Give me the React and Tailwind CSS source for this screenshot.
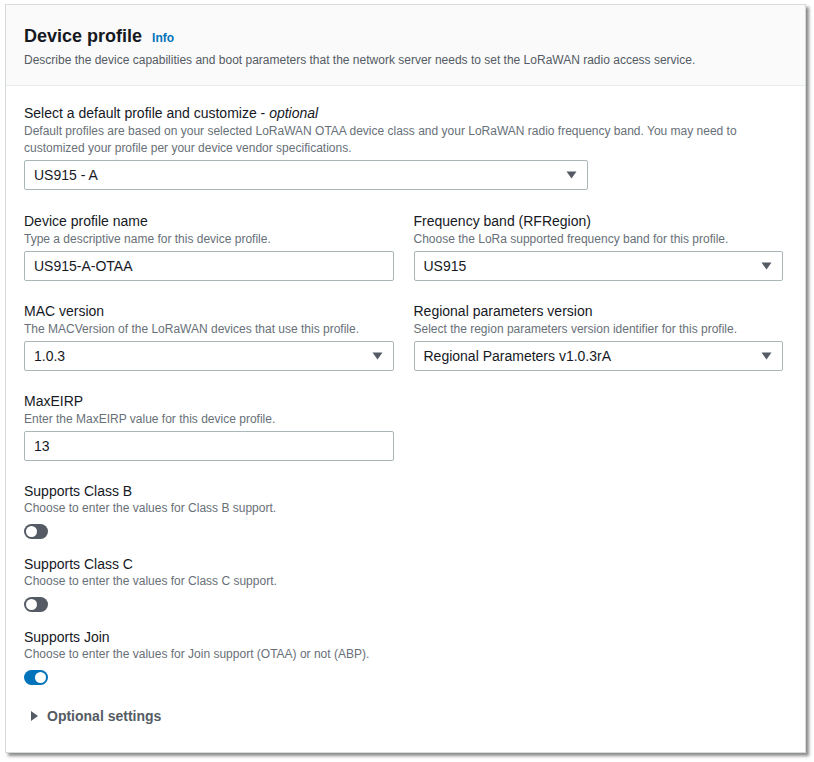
import React from 'react';

const Caret = () => (
  <svg width="11" height="8" viewBox="0 0 11 8" className="shrink-0">
    <path d="M0.5 0.5 L10.5 0.5 L5.5 7.5 Z" fill="#545b64" />
  </svg>
);

const Field = ({ label, help, children }) => (
  <div className="flex flex-col">
    <div className="text-[14px] leading-[18px] text-[#16191f]">{label}</div>
    <div className="text-[12px] leading-[16px] text-[#687078] mt-[1px]">{help}</div>
    <div className="mt-[4px]">{children}</div>
  </div>
);

const Input = ({ value }) => (
  <div className="h-[30px] border border-[#aab7b8] rounded-[2px] flex items-center px-[9px] text-[14px] text-[#16191f] bg-white">
    {value}
  </div>
);

const Select = ({ value }) => (
  <div className="h-[30px] border border-[#aab7b8] rounded-[2px] flex items-center justify-between pl-[9px] pr-[10px] text-[14px] text-[#16191f] bg-white">
    <span>{value}</span>
    <Caret />
  </div>
);

const Toggle = ({ on }) => (
  <div
    className={
      'w-[24px] h-[15px] rounded-full flex items-center px-[2px] ' +
      (on ? 'bg-[#0073bb] justify-end' : 'bg-[#545b64] justify-start')
    }
  >
    <div className="w-[11px] h-[11px] rounded-full bg-white" />
  </div>
);

const ToggleField = ({ label, help, on }) => (
  <div className="flex flex-col">
    <div className="text-[14px] leading-[18px] text-[#16191f]">{label}</div>
    <div className="text-[12px] leading-[16px] text-[#687078]">{help}</div>
    <div className="mt-[8px]">
      <Toggle on={on} />
    </div>
  </div>
);

export default function App() {
  return (
    <div className="w-[814px] h-[762px] bg-white pt-[4px] pl-[5px]" style={{ fontFamily: '"Liberation Sans", Arial, sans-serif' }}>
      <div className="w-[801px] h-[749px] bg-white border border-[#d5dbdb] shadow-[3px_3px_3px_rgba(0,0,0,0.45)] flex flex-col">
        {/* Header */}
        <div className="bg-[#fafafa] border-b border-[#eaeded] px-[18px] pt-[20px] pb-[17px]">
          <div className="flex items-baseline gap-[10px]">
            <h2 className="text-[18px] leading-[22px] font-bold text-[#16191f]">Device profile</h2>
            <span className="text-[12px] font-bold text-[#0073bb]">Info</span>
          </div>
          <p className="text-[12px] leading-[16px] text-[#545b64] mt-[5px]">
            Describe the device capabilities and boot parameters that the network server needs to set the LoRaWAN radio access service.
          </p>
        </div>

        {/* Body */}
        <div className="px-[18px] pt-[18px] flex flex-col">
          <div className="flex flex-col w-[730px]">
            <div className="text-[14px] leading-[18px] text-[#16191f]">
              Select a default profile and customize - <i>optional</i>
            </div>
            <div className="text-[12px] leading-[17px] text-[#687078] mt-[1px]">
              Default profiles are based on your selected LoRaWAN OTAA device class and your LoRaWAN radio frequency band. You may need to customized your profile per your device vendor specifications.
            </div>
          </div>
          <div className="w-[564px] mt-[3px]">
            <Select value="US915 - A" />
          </div>

          <div className="w-[759px] grid grid-cols-2 gap-x-[20px] gap-y-[21px] mt-[22px]">
            <Field label="Device profile name" help="Type a descriptive name for this device profile.">
              <Input value="US915-A-OTAA" />
            </Field>
            <Field label="Frequency band (RFRegion)" help="Choose the LoRa supported frequency band for this profile.">
              <Select value="US915" />
            </Field>
            <Field label="MAC version" help="The MACVersion of the LoRaWAN devices that use this profile.">
              <Select value="1.0.3" />
            </Field>
            <Field label="Regional parameters version" help="Select the region parameters version identifier for this profile.">
              <Select value="Regional Parameters v1.0.3rA" />
            </Field>
            <Field label="MaxEIRP" help="Enter the MaxEIRP value for this device profile.">
              <Input value="13" />
            </Field>
          </div>

          <div className="flex flex-col gap-[16px] mt-[21px]">
            <ToggleField label="Supports Class B" help="Choose to enter the values for Class B support." />
            <ToggleField label="Supports Class C" help="Choose to enter the values for Class C support." />
            <ToggleField label="Supports Join" help="Choose to enter the values for Join support (OTAA) or not (ABP)." on />
          </div>

          <div className="flex items-center gap-[9px] mt-[22px] pl-[7px]">
            <svg width="7" height="10" viewBox="0 0 7 10">
              <path d="M0 0 L7 5 L0 10 Z" fill="#545b64" />
            </svg>
            <span className="text-[14px] leading-[18px] font-bold text-[#545b64]">Optional settings</span>
          </div>
        </div>
      </div>
    </div>
  );
}
